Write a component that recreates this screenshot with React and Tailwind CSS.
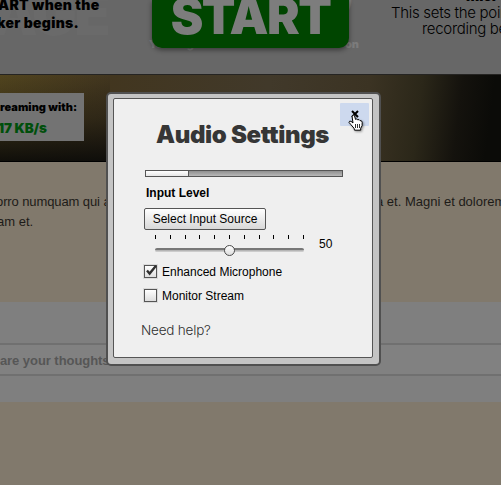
const helvetica = "font-['Liberation_Sans',Arial,sans-serif]";
const display = "font-['Inter',sans-serif]";

function Header() {
  return (
    <header className={`relative flex h-[74px] w-full shrink-0 overflow-hidden bg-[#676767] ${display}`}>
      <div className="absolute left-[-10px] top-[-17px] text-[60px] font-black leading-[60px] tracking-[-3px] text-[#6a6a6a]">AGE</div>
      <div className="relative w-[152px] shrink-0 text-[14px] font-black leading-[19px] text-black">
        <div className="-mt-[5px] -ml-[2px] whitespace-nowrap tracking-[0.3px]">ART when the</div>
        <div className="-ml-[3px] mt-[-1px] whitespace-nowrap tracking-[0.3px]">ker begins.</div>
      </div>
      <div className="absolute left-[149px] top-[37px] flex w-[210px] justify-between text-[11px] font-black leading-[14px] text-[#7c7c7c]">
        <span>Your signal</span>
        <span>on</span>
      </div>
      <div className="absolute left-[345px] top-[-12px] text-[24px] leading-[24px] text-[#777]">)</div>
      <button className="relative flex h-[48px] w-[197px] shrink-0 items-end justify-center rounded-b-[10px] bg-[#004500] text-[49px] font-black leading-[48px] tracking-[-1.5px] text-[#7d7d7d] shadow-[0_2px_5px_rgba(0,0,0,0.45)]">
        <span className="mb-[7px]">START</span>
      </button>
      <div className="ml-[42px] shrink-0 whitespace-nowrap text-[15px] font-light leading-[16px] text-black">
        <div className="-mt-[12px] ml-[75px] text-[14px] font-black">micr</div>
        <div className="mt-[1px] tracking-[-0.3px]">This sets the point</div>
        <div className="ml-[31px] tracking-[-0.3px]">recording be</div>
      </div>
    </header>
  );
}

function Banner() {
  return (
    <section className="flex h-[88px] w-full shrink-0 border-b border-t border-b-black border-t-[#252422] bg-[#0c0b08]">
      <div className="flex-[110] bg-[linear-gradient(180deg,rgba(9,9,8,0)_0%,rgba(9,9,8,0.35)_50%,rgba(9,9,8,0.9)_100%),linear-gradient(90deg,#51441e_0%,#42361f_100%)] pt-[18px]">
        <div className={`h-[48px] w-[84px] overflow-hidden whitespace-nowrap bg-[#737373] font-black ${display}`}>
          <div className="pt-[6px] text-[11px] leading-[17px] tracking-[0.05px] text-black">reaming with:</div>
          <div className="-ml-[2px] mt-[4px] text-[13.5px] leading-[17px] tracking-[-0.1px] text-[#004f0b]">17 KB/s</div>
        </div>
      </div>
      <div className="flex-[391] bg-[linear-gradient(97deg,#42361f_0%,#41392a_40%,#3b3323_65%,#2b2719_78%,#14120d_88%,#0b0b08_96%)]" />
    </section>
  );
}

function Comments() {
  return (
    <section className={`h-[100px] shrink-0 bg-[#7f7f7f] pt-[41px] ${helvetica}`}>
      <div className="h-[33px] border-y-2 border-[#707070] bg-[#818181]">
        <div className="-ml-[8px] pt-[8px] text-[13px] font-bold leading-[15px] tracking-[-0.05px] text-[#565656]">hare your thoughts</div>
      </div>
    </section>
  );
}

function Checkbox({ label, checked }) {
  return (
    <label className="flex h-[24px] items-center">
      <span className="flex h-[13px] w-[13px] items-center justify-center border border-[#555] bg-gradient-to-b from-white to-[#dedede] shadow-[0_0_0_1px_#dadada]">
        {checked && (
          <svg viewBox="0 0 13 13" className="h-[13px] w-[13px] shrink-0 overflow-visible">
            <path d="M3 5.6 L5.6 8.6 L12 0.8" fill="none" stroke="#303030" strokeWidth="2.3" />
          </svg>
        )}
      </span>
      <span className="ml-[5px] mt-px text-[12px] leading-[16px] text-black">{label}</span>
    </label>
  );
}

function Slider() {
  return (
    <div className="ml-[11px] flex h-[25px]">
      <div className="w-[149px] pt-[5px]">
        <div className="flex justify-between">
          {Array.from({ length: 11 }, (_, i) => (
            <span key={i} className="h-[4px] w-px bg-black" />
          ))}
        </div>
        <div className="relative mt-[9px] h-[4px] rounded-sm border-b border-t-2 border-b-[#ccc] border-t-[#777] bg-[#b5b5b5]">
          <span className="absolute -top-[5px] left-[69px] h-[11px] w-[11px] rounded-full border border-[#4c4c4c] bg-gradient-to-b from-white to-[#ddd]" />
        </div>
      </div>
      <span className="ml-[15px] mt-[6px] text-[12px] leading-[16px] text-black">50</span>
    </div>
  );
}

function HandCursor() {
  return (
    <svg viewBox="0 0 16 18" className="absolute left-[8px] top-[11px] h-[18px] w-[16px] drop-shadow-[1px_1px_1px_rgba(0,0,0,0.4)]">
      <path
        d="M4 2 Q5.2 .2 6.6 2 L7.5 5.4 Q8.7 4.4 9.8 5.8 Q11.1 5 12 6.6 Q13.8 6.2 14.2 8.2 L14.1 11.8 L12.7 14.2 L12.7 16.2 L6.5 16.2 L6 14.2 L2.8 10.5 L1 8.4 Q1.2 6.6 3 7.3 L5 9 Z"
        fill="white"
        stroke="black"
        strokeWidth="1"
      />
      <path d="M7.5 10v4 M9.5 10v4 M11.5 10v4" stroke="black" strokeWidth=".8" />
    </svg>
  );
}

function SettingsDialog() {
  return (
    <div role="dialog" className="absolute left-[106px] top-[92px] h-[274px] w-[275px] rounded-[5px] border-2 border-[#505050] bg-[#c4c4c4] pb-[6px] pl-[5px] pr-[6px] pt-[4px]">
      <div className={`relative h-full rounded-[2px] border border-[#555] bg-[#efefef] pl-[30px] ${helvetica}`}>
        <button aria-label="Close" className="absolute right-[3px] top-[4px] h-[23px] w-[29px] rounded-[1px] bg-[#cdd9ee]">
          <svg viewBox="0 0 8 8" className="absolute left-[11px] top-[7px] h-[8px] w-[8px]">
            <path d="M1 1L7 7M7 1L1 7" stroke="black" strokeWidth="2" />
          </svg>
          <HandCursor />
        </button>
        <h1 className={`ml-[12px] whitespace-nowrap pt-[21px] text-[24px] font-black leading-[30px] tracking-[-0.35px] text-[#363636] ${display}`}>Audio Settings</h1>
        <div className="ml-px mt-[20px] flex h-[7px] w-[198px] border border-[#555] bg-gradient-to-b from-[#8f8f8f] to-[#b8b8b8]">
          <div className="w-[43px] border-r border-[#555] bg-gradient-to-b from-white to-[#e6e6e6]" />
        </div>
        <div className="ml-[2px] mt-[8px] text-[12px] font-bold leading-[16px] text-black">Input Level</div>
        <button className="mt-[7px] block h-[22px] w-[122px] whitespace-nowrap rounded-[2px] border border-[#555] bg-gradient-to-b from-white to-[#d8d8d8] text-[12px] leading-[20px] text-black">
          Select Input Source
        </button>
        <Slider />
        <div className="mt-[4px]">
          <Checkbox label="Enhanced Microphone" checked />
          <Checkbox label="Monitor Stream" />
        </div>
        <div className={`-ml-[3px] mt-[13px] text-[13.5px] font-light leading-[20px] tracking-[-0.2px] text-[#303030] ${display}`}>Need help?</div>
      </div>
    </div>
  );
}

export default function App() {
  return (
    <main className="relative flex h-[485px] w-[501px] flex-col overflow-hidden bg-[#81796c]">
      <Header />
      <Banner />
      <article className={`h-[140px] shrink-0 pt-[30px] text-[13px] leading-[20px] text-[#1d1b18] ${helvetica}`}>
        <div className="flex whitespace-nowrap">
          <span className="-ml-[4px] w-[380px] shrink-0 tracking-[-0.1px]">orro numquam qui a</span>
          <span className="tracking-[0px]">a et. Magni et dolorem</span>
        </div>
        <div className="-ml-[3px]">am et.</div>
      </article>
      <Comments />
      <SettingsDialog />
    </main>
  );
}
